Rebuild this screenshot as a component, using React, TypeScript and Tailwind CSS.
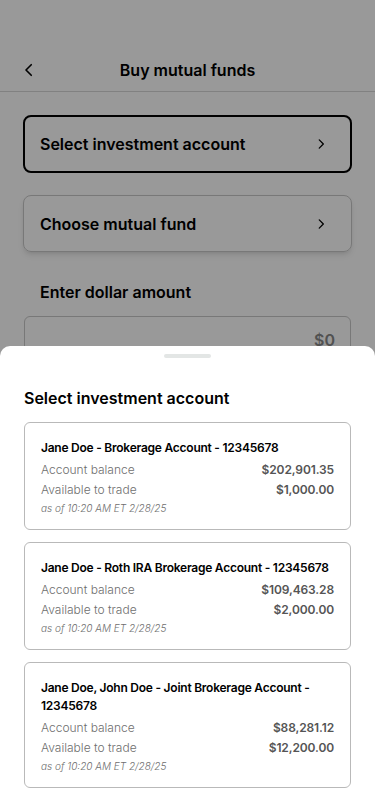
import type { FC } from "react";

const accounts = [
  {
    name: "Jane Doe - Brokerage Account - 12345678",
    balance: "$202,901.35",
    available: "$1,000.00",
  },
  {
    name: "Jane Doe - Roth IRA Brokerage Account - 12345678",
    balance: "$109,463.28",
    available: "$2,000.00",
  },
  {
    name: "Jane Doe, John Doe - Joint Brokerage Account - 12345678",
    balance: "$88,281.12",
    available: "$12,200.00",
  },
];

const Chevron: FC<{ dir: "left" | "right"; className?: string }> = ({ dir, className }) => (
  <svg viewBox="0 0 24 24" className={className} fill="none" stroke="currentColor" strokeWidth={2.2} strokeLinecap="round" strokeLinejoin="round">
    {dir === "left" ? <path d="M15 5l-7 7 7 7" /> : <path d="M9 5l7 7-7 7" />}
  </svg>
);

const AccountCard: FC<{ name: string; balance: string; available: string }> = ({ name, balance, available }) => (
  <button className="w-full rounded-md border border-[#b9b9b9] bg-white px-4 pb-[13px] pt-4 text-left">
    <p className="text-[12px] font-semibold leading-[18px] tracking-[-0.02em] text-black">{name}</p>
    <div className="mt-[3px] flex items-center justify-between text-[12px] leading-5">
      <span className="font-light text-[#6e6e6e]">Account balance</span>
      <span className="font-semibold tracking-[-0.01em] text-[#555]">{balance}</span>
    </div>
    <div className="flex items-center justify-between text-[12px] leading-5">
      <span className="font-light text-[#6e6e6e]">Available to trade</span>
      <span className="font-semibold tracking-[-0.01em] text-[#555]">{available}</span>
    </div>
    <p className="text-[10px] italic font-light leading-4 text-[#6e6e6e]">as of 10:20 AM ET 2/28/25</p>
  </button>
);

export default function App() {
  return (
    <div className="relative h-[812px] w-[375px] overflow-hidden bg-white font-['Inter','Liberation_Sans',sans-serif] text-black">
      {/* underlying page */}
      <div className="h-12" />
      <header className="flex h-11 items-center border-b border-[#d8d8d8] px-5">
        <Chevron dir="left" className="h-[18px] w-[18px]" />
        <h1 className="flex-1 pr-[18px] text-center text-[16px] font-semibold">Buy mutual funds</h1>
      </header>
      <div className="mx-[23px] mt-[23px] flex h-[58px] items-center justify-between rounded-lg border-2 border-black pl-[15px] pr-[22px]">
        <span className="text-[16px] font-semibold">Select investment account</span>
        <Chevron dir="right" className="h-[14px] w-[14px]" />
      </div>
      <div className="mx-[23px] mt-[22px] flex h-[57px] items-center justify-between rounded-lg border border-[#c8c8c8] pl-4 pr-[23px] shadow-md">
        <span className="text-[16px] font-semibold">Choose mutual fund</span>
        <Chevron dir="right" className="h-[14px] w-[14px]" />
      </div>
      <p className="mx-10 mt-[30px] text-[16px] font-semibold leading-5">Enter dollar amount</p>
      <div className="mx-6 mt-[14px] flex h-12 items-center justify-end rounded-md border border-[#c8c8c8] px-[15px]">
        <span className="text-[16px] font-semibold text-[#888]">$0</span>
      </div>

      {/* dim overlay */}
      <div className="absolute inset-0 bg-black/40" />

      {/* bottom sheet */}
      <div className="absolute inset-x-0 bottom-0 top-[346px] rounded-t-[10px] bg-white px-6">
        <div className="mx-auto mt-2 h-1 w-[47px] rounded-full bg-[#e3e6e5]" />
        <h2 className="mt-7 text-[16px] font-semibold leading-6">Select investment account</h2>
        <div className="mt-3 flex flex-col gap-3">
          {accounts.map((a) => (
            <AccountCard key={a.name} {...a} />
          ))}
        </div>
      </div>
    </div>
  );
}
